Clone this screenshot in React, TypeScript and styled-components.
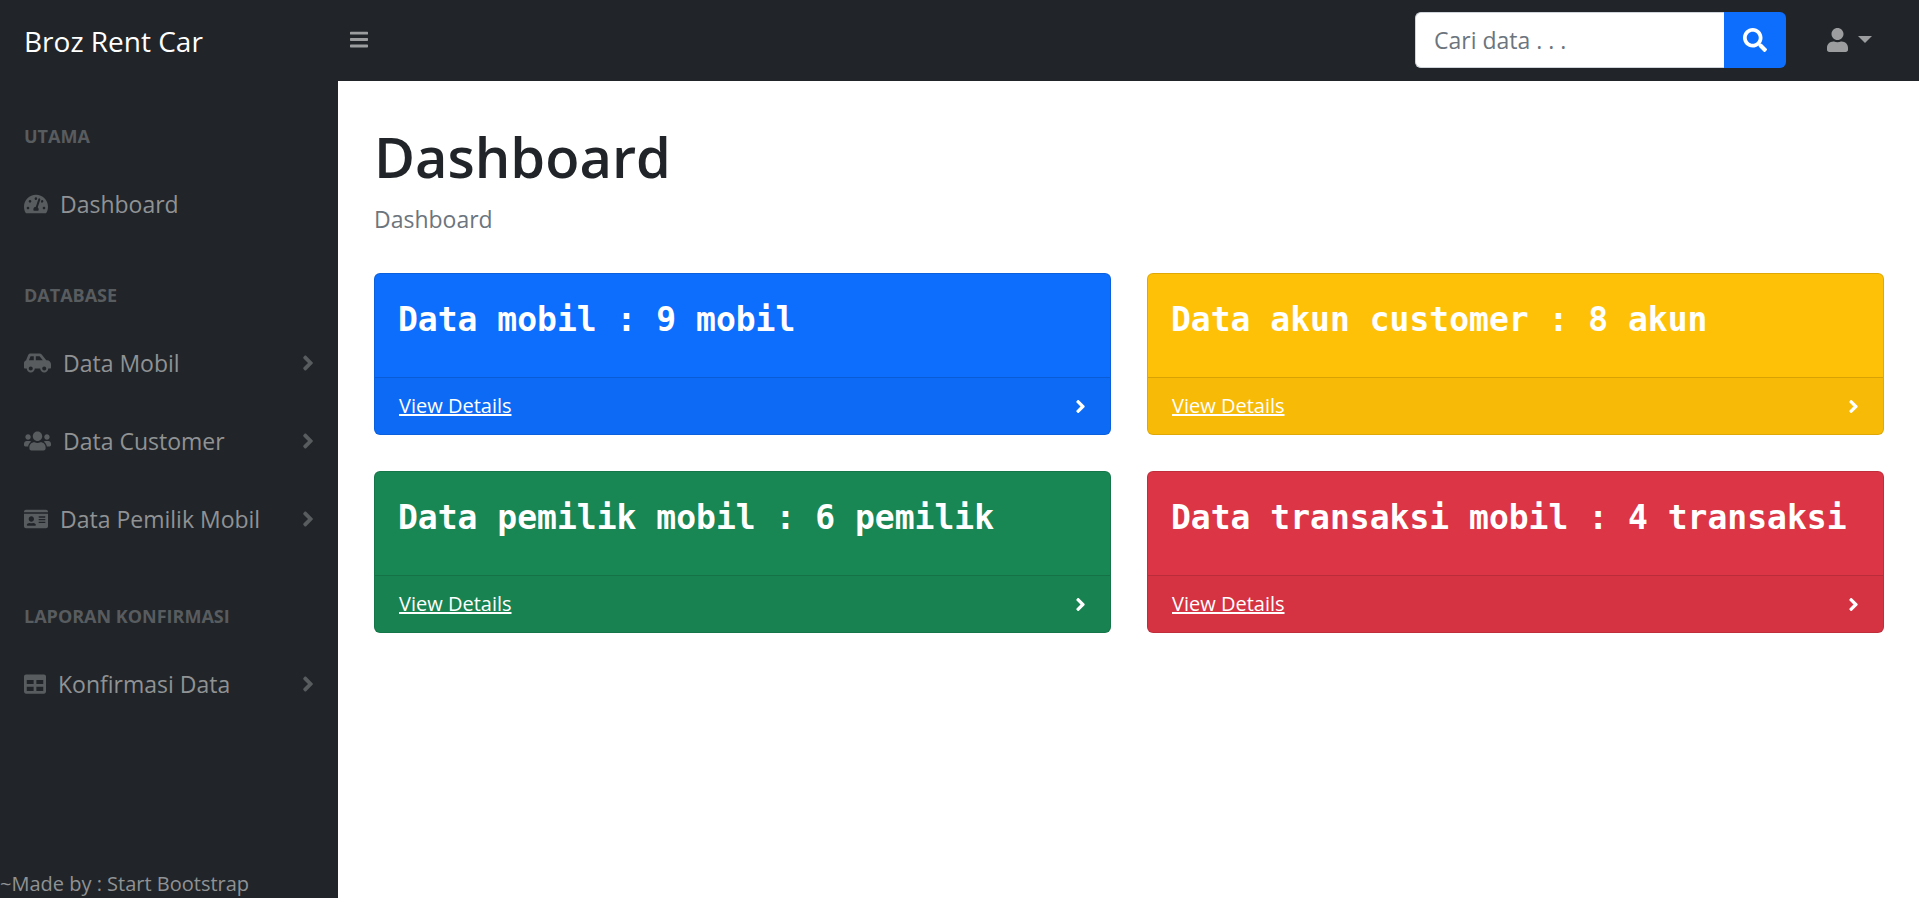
import React from "react";
import styled, { createGlobalStyle } from "styled-components";
import {
  FaAngleRight,
  FaBars,
  FaCarSide,
  FaIdCard,
  FaSearch,
  FaTable,
  FaTachometerAlt,
  FaUser,
  FaUsers,
} from "react-icons/fa";
import type { IconType } from "react-icons";

const GlobalStyle = createGlobalStyle`
  *, *::before, *::after { box-sizing: border-box; }
  body {
    margin: 0;
    background: #fff;
    color: #212529;
    font-family: "Open Sans", "Noto Sans", sans-serif;
    font-size: 23px;
    line-height: 36px;
  }
  button, input { font: inherit; }
  svg { display: block; flex-shrink: 0; }
`;

const Page = styled.div`
  display: flex;
  flex-direction: column;
  min-height: 100vh;
`;

const Topbar = styled.header`
  display: flex;
  align-items: center;
  height: 81px;
  padding: 0 35px 2px 0;
  background: #212529;
`;

const Brand = styled.a`
  width: 338px;
  padding: 2px 24px 0;
  color: #fff;
  font-size: 28px;
  text-decoration: none;
  white-space: nowrap;
`;

const IconButton = styled.button<{ $width: number; $height: number }>`
  display: flex;
  align-items: center;
  gap: 10px;
  padding: 6px 12px;
  border: 0;
  background: none;
  color: #9b9d9f;
  cursor: pointer;

  svg {
    width: ${(p) => p.$width}px;
    height: ${(p) => p.$height}px;
  }
`;

const Caret = styled.span`
  border-top: 7px solid currentColor;
  border-left: 7px solid transparent;
  border-right: 7px solid transparent;
`;

const SearchForm = styled.form`
  display: flex;
  height: 56px;
  margin-left: auto;
  margin-right: 29px;
`;

const SearchInput = styled.input`
  width: 309px;
  padding: 9px 18px;
  border: 1px solid #ced4da;
  border-right: 0;
  border-radius: 6px 0 0 6px;
  background: #fff;
  color: #212529;

  &::placeholder { color: #6c757d; opacity: 1; }
`;

const SearchButton = styled.button`
  display: flex;
  align-items: center;
  padding: 0 19px;
  border: 0;
  border-radius: 0 6px 6px 0;
  background: #0d6efd;
  color: #fff;
  cursor: pointer;

  svg { width: 24px; height: 24px; }
`;

const Body = styled.div`
  display: flex;
  flex: 1;
`;

const Sidebar = styled.aside`
  display: flex;
  flex-direction: column;
  flex: 0 0 338px;
  background: #212529;
  color: #909294;
`;

const Menu = styled.nav`
  flex: 1;
`;

const MenuHeading = styled.h2`
  margin: 0;
  padding: 42px 24px 18px;
  color: #595c5f;
  font-size: 18px;
  font-weight: 700;
  line-height: 27px;
  text-transform: uppercase;
`;

const MenuLink = styled.a<{ $collapsible: boolean; $iconWidth: number }>`
  display: flex;
  align-items: center;
  gap: 12px;
  height: 72px;
  margin-bottom: ${(p) => (p.$collapsible ? 6 : 0)}px;
  padding: 0 24px;
  color: inherit;
  text-decoration: none;
  white-space: nowrap;

  svg {
    width: ${(p) => p.$iconWidth}px;
    height: 22px;
    color: #595c5f;
  }

  svg:nth-of-type(2) {
    width: 12px;
    height: 24px;
    margin-left: auto;
  }
`;

const Credit = styled.footer`
  font-size: 20px;
  line-height: 28px;
`;

const Main = styled.main`
  flex: 1;
  min-width: 0;
  padding: 39px 35px 36px 36px;
`;

const Title = styled.h1`
  margin: 0 0 9px;
  font-size: 56px;
  font-weight: 600;
  line-height: 72px;
`;

const Breadcrumb = styled.ol`
  margin: 0 0 36px;
  padding: 0;
  color: #6c757d;
  list-style: none;
`;

const CardGrid = styled.div`
  display: grid;
  grid-template-columns: repeat(2, minmax(0, 1fr));
  gap: 36px;
`;

const Card = styled.section<{ $color: string }>`
  overflow: hidden;
  border: 1px solid rgba(0, 0, 0, 0.125);
  border-radius: 6px;
  background: ${(p) => p.$color};
  color: #fff;
`;

const CardTitle = styled.h2`
  margin: 0;
  padding: 24px 23px 36px;
  font-family: "DejaVu Sans Mono", monospace;
  font-size: 33px;
  font-weight: 700;
  line-height: 43px;
`;

const CardFooter = styled.div`
  display: flex;
  align-items: center;
  justify-content: space-between;
  padding: 12px 24px;
  border-top: 1px solid rgba(0, 0, 0, 0.125);
  background: rgba(0, 0, 0, 0.03);
  font-size: 20px;
  line-height: 32px;

  a { color: inherit; }
  svg { width: 11px; height: 21px; }
`;

type MenuItem = {
  label: string;
  icon: IconType;
  iconWidth: number;
  collapsible: boolean;
};

const menu: { heading: string; items: MenuItem[] }[] = [
  {
    heading: "Utama",
    items: [
      { label: "Dashboard", icon: FaTachometerAlt, iconWidth: 24, collapsible: false },
    ],
  },
  {
    heading: "Database",
    items: [
      { label: "Data Mobil", icon: FaCarSide, iconWidth: 27, collapsible: true },
      { label: "Data Customer", icon: FaUsers, iconWidth: 27, collapsible: true },
      { label: "Data Pemilik Mobil", icon: FaIdCard, iconWidth: 24, collapsible: true },
    ],
  },
  {
    heading: "Laporan Konfirmasi",
    items: [
      { label: "Konfirmasi Data", icon: FaTable, iconWidth: 22, collapsible: true },
    ],
  },
];

const cards = [
  { title: "Data mobil : 9 mobil", color: "#0d6efd" },
  { title: "Data akun customer : 8 akun", color: "#ffc107" },
  { title: "Data pemilik mobil : 6 pemilik", color: "#198754" },
  { title: "Data transaksi mobil : 4 transaksi", color: "#dc3545" },
];

export default function App() {
  return (
    <Page>
      <GlobalStyle />
      <Topbar>
        <Brand href="#">Broz Rent Car</Brand>
        <IconButton $width={18} $height={21} type="button" aria-label="Menu">
          <FaBars />
        </IconButton>
        <SearchForm onSubmit={(e) => e.preventDefault()}>
          <SearchInput type="text" placeholder="Cari data . . ." aria-label="Cari data" />
          <SearchButton type="submit" aria-label="Cari">
            <FaSearch />
          </SearchButton>
        </SearchForm>
        <IconButton $width={21} $height={24} type="button" aria-label="Akun">
          <FaUser />
          <Caret />
        </IconButton>
      </Topbar>
      <Body>
        <Sidebar>
          <Menu>
            {menu.map((group) => (
              <React.Fragment key={group.heading}>
                <MenuHeading>{group.heading}</MenuHeading>
                {group.items.map(({ label, icon: Icon, iconWidth, collapsible }) => (
                  <MenuLink
                    key={label}
                    href="#"
                    $collapsible={collapsible}
                    $iconWidth={iconWidth}
                  >
                    <Icon />
                    {label}
                    {collapsible && <FaAngleRight />}
                  </MenuLink>
                ))}
              </React.Fragment>
            ))}
          </Menu>
          <Credit>~Made by : Start Bootstrap</Credit>
        </Sidebar>
        <Main>
          <Title>Dashboard</Title>
          <Breadcrumb>
            <li>Dashboard</li>
          </Breadcrumb>
          <CardGrid>
            {cards.map((card) => (
              <Card key={card.title} $color={card.color}>
                <CardTitle>{card.title}</CardTitle>
                <CardFooter>
                  <a href="#">View Details</a>
                  <FaAngleRight />
                </CardFooter>
              </Card>
            ))}
          </CardGrid>
        </Main>
      </Body>
    </Page>
  );
}
